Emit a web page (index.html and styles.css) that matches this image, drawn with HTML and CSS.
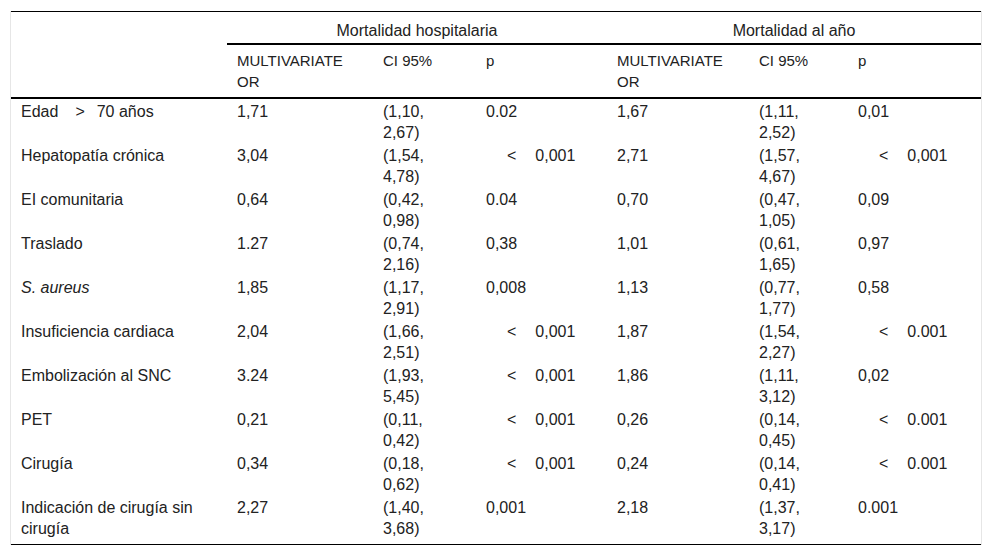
FILE: index.html
```html
<!DOCTYPE html>
<html lang="es">
<head>
<meta charset="utf-8">
<title>Tabla</title>
<link rel="stylesheet" href="styles.css">
</head>
<body>
<div class="wrap">
<table class="tbl">
  <colgroup>
    <col class="c1"><col class="c2"><col class="c3"><col class="c4"><col class="c5"><col class="c6"><col class="c7">
  </colgroup>
  <thead>
    <tr class="h1">
      <th rowspan="2" class="blank"></th>
      <th colspan="3" class="grp">Mortalidad hospitalaria</th>
      <th colspan="3" class="grp">Mortalidad al año</th>
    </tr>
    <tr class="h2">
      <th>MULTIVARIATE OR</th>
      <th>CI 95%</th>
      <th>p</th>
      <th>MULTIVARIATE OR</th>
      <th>CI 95%</th>
      <th>p</th>
    </tr>
  </thead>
  <tbody>
    <tr><td>Edad<span class="gt">&gt;</span>70 años</td><td>1,71</td><td>(1,10,<br>2,67)</td><td>0.02</td><td>1,67</td><td>(1,11,<br>2,52)</td><td>0,01</td></tr>
    <tr><td>Hepatopatía crónica</td><td>3,04</td><td>(1,54,<br>4,78)</td><td><span class="lt">&lt;</span>0,001</td><td>2,71</td><td>(1,57,<br>4,67)</td><td><span class="lt">&lt;</span>0,001</td></tr>
    <tr><td>EI comunitaria</td><td>0,64</td><td>(0,42,<br>0,98)</td><td>0.04</td><td>0,70</td><td>(0,47,<br>1,05)</td><td>0,09</td></tr>
    <tr><td>Traslado</td><td>1.27</td><td>(0,74,<br>2,16)</td><td>0,38</td><td>1,01</td><td>(0,61,<br>1,65)</td><td>0,97</td></tr>
    <tr><td><em>S. aureus</em></td><td>1,85</td><td>(1,17,<br>2,91)</td><td>0,008</td><td>1,13</td><td>(0,77,<br>1,77)</td><td>0,58</td></tr>
    <tr><td>Insuficiencia cardiaca</td><td>2,04</td><td>(1,66,<br>2,51)</td><td><span class="lt">&lt;</span>0,001</td><td>1,87</td><td>(1,54,<br>2,27)</td><td><span class="lt">&lt;</span>0.001</td></tr>
    <tr><td>Embolización al SNC</td><td>3.24</td><td>(1,93,<br>5,45)</td><td><span class="lt">&lt;</span>0,001</td><td>1,86</td><td>(1,11,<br>3,12)</td><td>0,02</td></tr>
    <tr><td>PET</td><td>0,21</td><td>(0,11,<br>0,42)</td><td><span class="lt">&lt;</span>0,001</td><td>0,26</td><td>(0,14,<br>0,45)</td><td><span class="lt">&lt;</span>0.001</td></tr>
    <tr><td>Cirugía</td><td>0,34</td><td>(0,18,<br>0,62)</td><td><span class="lt">&lt;</span>0,001</td><td>0,24</td><td>(0,14,<br>0,41)</td><td><span class="lt">&lt;</span>0.001</td></tr>
    <tr class="last"><td>Indicación de cirugía sin cirugía</td><td>2,27</td><td>(1,40,<br>3,68)</td><td>0,001</td><td>2,18</td><td>(1,37,<br>3,17)</td><td>0.001</td></tr>
  </tbody>
</table>
</div>
</body>
</html>
```

FILE: styles.css
```css
html, body {
  margin: 0;
  padding: 0;
  background: #ffffff;
}

body {
  font-family: "Liberation Sans", Arial, sans-serif;
  font-size: 16px;
  color: #222222;
}

.wrap {
  margin: 11px 0 0 10px;
  width: 970px;
  border-left: 1px solid #e6e6e6;
  border-right: 1px solid #e6e6e6;
}

.tbl {
  width: 970px;
  table-layout: fixed;
  border-collapse: separate;
  border-spacing: 0;
  border-top: 1px solid #000000;
  border-bottom: 1px solid #000000;
}

.c1 { width: 216px; }
.c2 { width: 146px; }
.c3 { width: 103px; }
.c4 { width: 131px; }
.c5 { width: 142px; }
.c6 { width: 99px; }
.c7 { width: 133px; }

.tbl th {
  font-weight: normal;
  text-align: left;
  vertical-align: top;
  line-height: 21px;
}

.h1 th {
  padding: 8px 10px 2px;
}

.h1 .grp {
  text-align: center;
  border-bottom: 2px solid #000000;
}

.h1 .blank {
  border-bottom: 2px solid #000000;
}

.h2 th {
  font-size: 15px;
  padding: 5px 10px 5px;
  border-bottom: 2px solid #000000;
}

.tbl td {
  vertical-align: top;
  text-align: left;
  line-height: 21px;
  padding: 2px 10px 0;
}

.tbl .last td {
  padding-bottom: 5px;
}

.gt {
  margin: 0 12px 0 17px;
}

.lt {
  margin: 0 19px 0 21px;
}
```
